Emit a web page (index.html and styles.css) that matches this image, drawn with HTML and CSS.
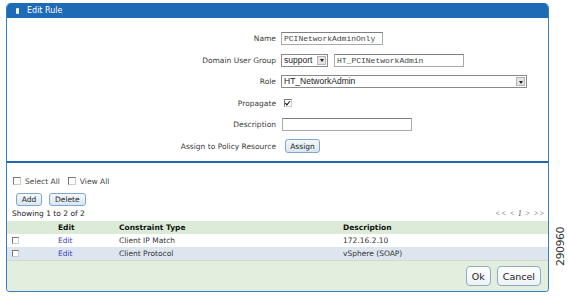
FILE: index.html
```html
<!DOCTYPE html>
<html lang="en">
<head>
  <meta charset="UTF-8">
  <title>Edit Rule</title>
  <link rel="stylesheet" href="styles.css">
</head>
<body>
  <div class="panel">
    <div class="titlebar"><span class="titleIcon"></span>Edit Rule</div>

    <form class="ruleForm">
      <label>Name</label>
      <div class="field"><input class="mono nameInput" type="text" value="PCINetworkAdminOnly"></div>

      <label>Domain User Group</label>
      <div class="field">
        <span class="select smallSelect">support<span class="arrow"></span></span>
        <input class="mono groupInput" type="text" value="HT_PCINetworkAdmin">
      </div>

      <label>Role</label>
      <div class="field"><span class="select roleSelect">HT_NetworkAdmin<span class="arrow"></span></span></div>

      <label>Propagate</label>
      <div class="field"><span class="check checked"></span></div>

      <label>Description</label>
      <div class="field"><input class="descInput" type="text"></div>

      <label>Assign to Policy Resource</label>
      <div class="field"><button type="button" class="btn assignBtn">Assign</button></div>
    </form>

    <div class="lower">
      <div class="selectRow">
        <span class="check"></span><span class="selLabel">Select All</span>
        <span class="check"></span><span class="selLabel">View All</span>
      </div>
      <div class="btnRow">
        <button type="button" class="btn addBtn">Add</button>
        <button type="button" class="btn">Delete</button>
      </div>
      <div class="showRow">
        <span>Showing 1 to 2 of 2</span>
        <span class="pager">&lt;&lt; &lt; 1 &gt; &gt;&gt;</span>
      </div>

      <table class="grid">
        <tr class="head">
          <th class="c1"></th><th class="c2">Edit</th><th class="c3">Constraint Type</th><th>Description</th>
        </tr>
        <tr>
          <td class="c1"><span class="check small"></span></td><td class="c2"><a href="#">Edit</a></td><td class="c3">Client IP Match</td><td>172.16.2.10</td>
        </tr>
        <tr class="alt">
          <td class="c1"><span class="check small"></span></td><td class="c2"><a href="#">Edit</a></td><td class="c3">Client Protocol</td><td>vSphere (SOAP)</td>
        </tr>
      </table>

      <div class="footer">
        <button type="button" class="btn big">Ok</button>
        <button type="button" class="btn big">Cancel</button>
      </div>
    </div>
  </div>

  <div class="figNum">290960</div>
</body>
</html>
```

FILE: styles.css
```css
body {
  margin: 0;
  background: #fff;
  font-family: "DejaVu Sans", Verdana, sans-serif;
  font-size: 7.5px;
  color: #222;
}

.panel {
  margin: 3px 0 0 6px;
  width: 541px;
  border: 1px solid #3a7cc0;
  border-top: none;
  border-radius: 5px 5px 4px 4px;
  overflow: hidden;
}

.titlebar {
  height: 15px;
  background: #1d6ab5;
  color: #fff;
  font-size: 8px;
  display: flex;
  align-items: center;
  padding-left: 9px;
}

.titleIcon {
  width: 3px;
  height: 6px;
  background: #f3efc4;
  border-radius: 1px;
  margin-right: 8px;
}

.ruleForm {
  display: grid;
  grid-template-columns: 269px 1fr;
  column-gap: 5px;
  grid-auto-rows: 21.5px;
  align-items: center;
  padding: 10px 0 4px;
  margin: 0;
  border-bottom: 2px solid #2268b0;
}

.ruleForm label {
  text-align: right;
  color: #3a3a3a;
}

.field {
  display: flex;
  align-items: center;
  gap: 6px;
}

input {
  height: 13px;
  box-sizing: border-box;
  border: 1px solid #a9a9a9;
  border-top-color: #7f7f7f;
  padding: 0 2px;
  margin: 0;
  background: #fff;
}

.mono {
  font-family: "Liberation Mono", monospace;
  font-size: 8px;
  color: #444;
}

.nameInput { width: 102px; }
.groupInput { width: 130px; }
.descInput { width: 130px; margin-left: 1px; }

.select {
  position: relative;
  height: 13px;
  box-sizing: border-box;
  border: 1px solid #8a8a8a;
  background: #fff;
  font-family: "Liberation Sans", Arial, sans-serif;
  font-size: 8.5px;
  line-height: 11px;
  padding-left: 2px;
  color: #222;
}

.smallSelect { width: 47px; }
.roleSelect { width: 246px; }

.arrow {
  position: absolute;
  right: 1px;
  top: 1px;
  width: 9px;
  height: 9px;
  background: #e4e4e4;
  border: 1px solid #b5b5b5;
  box-sizing: border-box;
}

.arrow::after {
  content: "";
  position: absolute;
  left: 1.5px;
  top: 2.5px;
  border-left: 2.5px solid transparent;
  border-right: 2.5px solid transparent;
  border-top: 3px solid #222;
}

.check {
  display: inline-block;
  width: 8px;
  height: 8px;
  box-sizing: border-box;
  border: 1px solid #777;
  border-right-color: #ccc;
  border-bottom-color: #ccc;
  background: #fff;
  position: relative;
}

.check.checked {
  margin-left: 3px;
}

.check.checked::after {
  content: "";
  position: absolute;
  left: 1px;
  top: 0;
  width: 2px;
  height: 4px;
  border-right: 1.5px solid #111;
  border-bottom: 1.5px solid #111;
  transform: rotate(40deg);
}

.btn {
  font-family: "DejaVu Sans", Verdana, sans-serif;
  font-size: 7.5px;
  color: #222;
  height: 13px;
  padding: 0 5px;
  border: 1px solid #7fa6cc;
  border-radius: 3px;
  background: linear-gradient(#f4f8fc, #d9e6f2);
  line-height: 11px;
}

.assignBtn {
  margin-left: 4px;
  width: 35px;
  height: 14px;
  padding: 0;
}

.lower {
  padding-top: 13px;
}

.selectRow {
  display: flex;
  align-items: center;
  padding-left: 6px;
  height: 10px;
}

.selectRow .check {
  margin-right: 4px;
}

.selLabel {
  margin-right: 8px;
  color: #444;
}

.btnRow {
  display: flex;
  gap: 7px;
  padding: 7px 0 0 9px;
}

.addBtn {
  width: 26px;
  padding: 0;
}

.showRow {
  display: flex;
  justify-content: space-between;
  align-items: center;
  padding: 2px 3px 0 5px;
  height: 11px;
}

.pager {
  font-style: italic;
  color: #555;
  font-family: "Liberation Serif", serif;
  font-size: 8px;
  letter-spacing: 0.5px;
}

.grid {
  width: 100%;
  border-collapse: collapse;
  margin-top: 2px;
}

.grid th, .grid td {
  height: 13px;
  padding: 0;
  text-align: left;
  font-size: 7.5px;
}

.grid th {
  background: #dbebd8;
  color: #111;
  font-weight: bold;
}

.grid td {
  background: #fff;
  color: #333;
}

.grid tr.alt td {
  background: #dde5ef;
}

.c1 { width: 46px; padding-left: 5px !important; }
.c2 { width: 61px; }
.c3 { width: 224px; }

.grid a {
  color: #3a3fb8;
  text-decoration: none;
}

.check.small {
  width: 7px;
  height: 7px;
  vertical-align: middle;
}

.footer {
  background: #e2efdf;
  height: 30px;
  display: flex;
  justify-content: flex-end;
  align-items: center;
  gap: 6px;
  padding-right: 7px;
  border-top: 1px solid #cfdccb;
}

.btn.big {
  font-size: 9.5px;
  height: 20px;
  border-color: #8fa9c3;
  border-radius: 4px;
  background: linear-gradient(#ffffff, #eef3f7);
  padding: 0 5px;
}

.figNum {
  position: absolute;
  left: 554px;
  top: 266px;
  transform-origin: 0 0;
  transform: rotate(-90deg);
  font-family: "DejaVu Sans", sans-serif;
  font-size: 11px;
  letter-spacing: -0.5px;
  color: #333;
}
```
